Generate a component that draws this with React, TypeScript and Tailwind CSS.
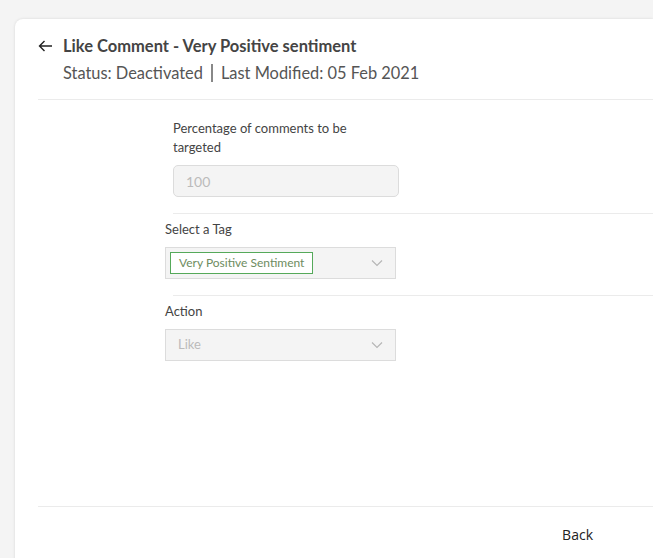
import React from "react";

const ChevronDown = () => (
  <svg width="12" height="8" viewBox="0 0 12 8" fill="none" className="shrink-0">
    <path d="M1 1.5L6 6.5L11 1.5" stroke="#b5b5b5" strokeWidth="1.1" />
  </svg>
);

const BackArrow = () => (
  <svg width="15" height="12" viewBox="0 0 15 12" fill="none">
    <path d="M14 6H1.5M6.5 1L1.5 6L6.5 11" stroke="#222" strokeWidth="1.4" />
  </svg>
);

const App = () => {
  return (
    <div
      className="h-[558px] w-[653px] overflow-hidden bg-[#f4f4f4] pl-[15px] pt-[19px]"
      style={{ fontFamily: "Lato, 'Open Sans', sans-serif" }}
    >
      <div className="flex h-[560px] flex-col rounded-tl-[8px] bg-white pl-[23px] shadow-[0_0_3px_rgba(0,0,0,0.12)]">
        {/* header */}
        <div className="flex h-[81px] flex-col border-b border-[#ebebeb] pt-[16px]">
          <div className="flex items-center gap-[10px]">
            <BackArrow />
            <span className="text-[16.5px] font-bold leading-[22px] text-[#444]">
              Like Comment - Very Positive sentiment
            </span>
          </div>
          <div className="mt-[4px] flex items-center pl-[25px] text-[16.4px] leading-[24px] text-[#555]">
            <span>Status: Deactivated</span>
            <span className="mx-[8px] h-[18px] w-[2px] bg-[#888]" />
            <span>Last Modified: 05 Feb 2021</span>
          </div>
        </div>

        {/* form */}
        <div className="flex h-[406px] flex-col pl-[135px]">
          <div className="border-b border-[#ebebeb] pb-[16px] pt-[19px]">
            <div className="w-[200px] text-[13px] leading-[19px] text-[#444]">
              Percentage of comments to be targeted
            </div>
            <div className="mt-[8px] flex h-[32px] w-[226px] items-center rounded-[5px] border border-[#dcdcdc] bg-[#f4f4f4] px-[12px] text-[14px] text-[#bbb]">
              100
            </div>
          </div>

          <div className="border-b border-[#ebebeb] pb-[16px] pt-[6px]">
            <div className="-ml-[8px]">
              <div className="text-[13px] leading-[19px] text-[#444]">Select a Tag</div>
              <div className="mt-[8px] flex h-[32px] w-[231px] items-center justify-between border border-[#dcdcdc] bg-[#f4f4f4] pl-[4px] pr-[12px]">
                <span className="flex h-[22px] items-center border border-[#55a95a] bg-white px-[8px] text-[12px] text-[#6e8c60]">
                  Very Positive Sentiment
                </span>
                <ChevronDown />
              </div>
            </div>
          </div>

          <div className="pt-[6px]">
            <div className="-ml-[8px]">
              <div className="text-[13px] leading-[19px] text-[#444]">Action</div>
              <div className="mt-[8px] flex h-[32px] w-[231px] items-center justify-between border border-[#dcdcdc] bg-[#f4f4f4] pl-[12px] pr-[12px] text-[13px] text-[#bbb]">
                <span>Like</span>
                <ChevronDown />
              </div>
            </div>
          </div>
        </div>

        {/* footer */}
        <div className="flex h-[55px] items-center justify-end border-t border-[#ebebeb] pr-[60px]">
          <span
            className="text-[14px] text-[#222]"
            style={{ fontFamily: "'Open Sans', sans-serif" }}
          >
            Back
          </span>
        </div>
      </div>
    </div>
  );
};

export default App;
